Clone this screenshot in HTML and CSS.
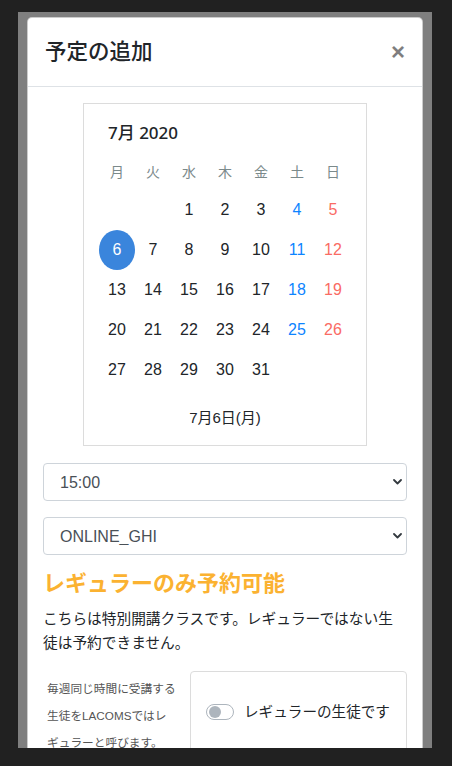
FILE: index.html
```html
<!DOCTYPE html>
<html lang="ja">
<head>
  <meta charset="UTF-8">
  <title>予定の追加</title>
  <link rel="stylesheet" href="styles.css">
</head>
<body>
  <div class="backdrop">
    <div class="modal">
      <div class="modal-header">
        <h5 class="modal-title">予定の追加</h5>
        <button class="close" type="button">×</button>
      </div>
      <div class="modal-body">
        <div class="calendar">
          <div class="cal-title">7月 2020</div>
          <div class="cal-week">
            <span>月</span><span>火</span><span>水</span><span>木</span><span>金</span><span>土</span><span>日</span>
          </div>
          <div class="cal-days">
            <span></span><span></span><span>1</span><span>2</span><span>3</span><span class="sat">4</span><span class="sun">5</span>
            <span class="selected">6</span><span>7</span><span>8</span><span>9</span><span>10</span><span class="sat">11</span><span class="sun">12</span>
            <span>13</span><span>14</span><span>15</span><span>16</span><span>17</span><span class="sat">18</span><span class="sun">19</span>
            <span>20</span><span>21</span><span>22</span><span>23</span><span>24</span><span class="sat">25</span><span class="sun">26</span>
            <span>27</span><span>28</span><span>29</span><span>30</span><span>31</span><span></span><span></span>
          </div>
          <div class="cal-footer">7月6日(月)</div>
        </div>

        <div class="select-wrap">
          <select class="form-select">
            <option>15:00</option>
          </select>
          <svg class="chevron" width="9" height="6" viewBox="0 0 9 6"><path d="M1 1l3.5 3.5L8 1" fill="none" stroke="#343a40" stroke-width="1.8" stroke-linecap="round" stroke-linejoin="round"/></svg>
        </div>
        <div class="select-wrap">
          <select class="form-select">
            <option>ONLINE_GHI</option>
          </select>
          <svg class="chevron" width="9" height="6" viewBox="0 0 9 6"><path d="M1 1l3.5 3.5L8 1" fill="none" stroke="#343a40" stroke-width="1.8" stroke-linecap="round" stroke-linejoin="round"/></svg>
        </div>

        <h4 class="notice-title">レギュラーのみ予約可能</h4>
        <p class="notice-text">こちらは特別開講クラスです。レギュラーではない生徒は予約できません。</p>

        <div class="regular-row">
          <div class="regular-help">毎週同じ時間に受講する生徒をLACOMSではレギュラーと呼びます。</div>
          <div class="regular-box">
            <label class="switch">
              <span class="switch-track"><span class="switch-knob"></span></span>
              レギュラーの生徒です
            </label>
          </div>
        </div>
      </div>
    </div>
  </div>
</body>
</html>
```

FILE: styles.css
```css
body {
  margin: 0;
  height: 766px;
  overflow: hidden;
  background: #212121;
  font-family: "Liberation Sans", "Noto Sans CJK JP", sans-serif;
  color: #212529;
}
.backdrop {
  box-sizing: border-box;
  width: 414px;
  height: 736px;
  margin: 12px 0 0 18px;
  padding: 5px 9px 0;
  background: #7f7f7f;
  overflow: hidden;
}
.modal {
  background: #fff;
  border: 1px solid rgba(0,0,0,0.2);
  border-radius: 5px 5px 0 0;
}
.modal-header {
  display: flex;
  align-items: flex-start;
  justify-content: space-between;
  padding: 19px 17px;
  border-bottom: 1px solid #dee2e6;
}
.modal-title {
  margin: 0;
  font-size: 21.5px;
  line-height: 30px;
  font-weight: 500;
}
.close {
  margin-top: 3px;
  padding: 0;
  border: none;
  background: none;
  font-family: "Liberation Sans", sans-serif;
  font-size: 24px;
  line-height: 24px;
  font-weight: 700;
  color: #000;
  opacity: 0.5;
}
.modal-body {
  padding: 16px 15px 0;
}
.calendar {
  width: 284px;
  box-sizing: border-box;
  margin: 0 auto;
  padding: 17px 15px;
  border: 1px solid #dcdcdc;
}
.cal-title {
  padding-left: 9px;
  font-family: "Noto Sans", "Noto Sans CJK JP", sans-serif;
  font-size: 17px;
  line-height: 24px;
  font-weight: 500;
  margin-bottom: 10px;
}
.cal-week, .cal-days {
  display: grid;
  grid-template-columns: repeat(7, 36px);
  text-align: center;
}
.cal-week span {
  height: 35px;
  line-height: 35px;
  font-size: 14px;
  color: #7b8a8b;
}
.cal-days span {
  height: 40px;
  line-height: 40px;
  font-size: 16px;
}
.cal-days .sat { color: #0d84ff; }
.cal-days .sun { color: #fa6b64; }
.cal-days .selected {
  background: #3a85dc;
  color: #fff;
  border-radius: 50%;
}
.cal-footer {
  margin-top: 18px;
  text-align: center;
  font-size: 15px;
  line-height: 20px;
}
.select-wrap {
  position: relative;
  margin-top: 17px;
}
.select-wrap + .select-wrap {
  margin-top: 16px;
}
.form-select {
  display: block;
  width: 100%;
  height: 38px;
  padding: 0 30px 0 16px;
  border: 1px solid #ced4da;
  border-radius: 4px;
  background: #fff;
  font-family: inherit;
  font-size: 16px;
  color: #495057;
  appearance: none;
  -webkit-appearance: none;
}
.chevron {
  position: absolute;
  right: 5px;
  top: 16px;
  pointer-events: none;
}
.notice-title {
  margin: 14px 0 0;
  font-size: 22px;
  line-height: 30px;
  font-weight: 700;
  color: #fbb231;
}
.notice-text {
  margin: 8px 0 0;
  font-size: 14.7px;
  line-height: 24px;
}
.regular-row {
  display: flex;
  margin-top: 16px;
}
.regular-help {
  flex: 0 0 130px;
  margin-right: 13px;
  padding: 4px 0 0 4px;
  font-size: 11.7px;
  line-height: 27px;
  color: #555;
}
.regular-box {
  flex: 1;
  padding: 29px 10px 29px 15px;
  border: 1px solid #dcdcdc;
  border-radius: 4px;
}
.switch {
  display: flex;
  align-items: center;
  gap: 10px;
  white-space: nowrap;
  font-size: 14.6px;
  line-height: 22px;
}
.switch-track {
  position: relative;
  box-sizing: border-box;
  width: 28px;
  height: 16px;
  border: 1px solid #adb5bd;
  border-radius: 8px;
  background: #fff;
}
.switch-knob {
  position: absolute;
  left: 2px;
  top: 1px;
  width: 12px;
  height: 12px;
  border-radius: 50%;
  background: #adb5bd;
}
```
